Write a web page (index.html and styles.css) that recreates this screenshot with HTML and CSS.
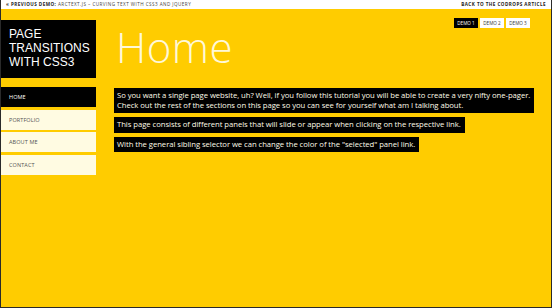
FILE: index.html
```html
<!DOCTYPE html>
<html>
<head>
<meta charset="utf-8">
<link rel="stylesheet" href="styles.css">
</head>
<body>
<div class="frame">
  <div class="topbar">
    <span class="prev"><b>&laquo; Previous Demo:</b> ArcText.js &ndash; Curving Text with CSS3 and jQuery</span>
    <span class="back"><b>Back to the Codrops Article</b></span>
  </div>
  <div class="main">
    <aside class="side">
      <h1 class="logo"><span class="logo-line">Page</span><span class="logo-line">Transitions</span><span class="logo-line">with CSS3</span></h1>
      <nav class="nav">
        <a class="nav-item active">Home</a>
        <a class="nav-item">Portfolio</a>
        <a class="nav-item">About me</a>
        <a class="nav-item">Contact</a>
      </nav>
    </aside>
    <section class="content">
      <h2 class="title">Home</h2>
      <div class="panels">
        <p class="panel">So you want a single page website, uh? Well, if you follow this tutorial you will be able to create a very nifty one-pager.<br>Check out the rest of the sections on this page so you can see for yourself what am I talking about.</p>
        <p class="panel">This page consists of different panels that will slide or appear when clicking on the respective link.</p>
        <p class="panel">With the general sibling selector we can change the color of the "selected" panel link.</p>
      </div>
    </section>
    <div class="demos">
      <a class="demo active">DEMO 1</a>
      <a class="demo">DEMO 2</a>
      <a class="demo">DEMO 3</a>
    </div>
  </div>
</div>
</body>
</html>
```
FILE: styles.css
```css
* { box-sizing: border-box; }
html, body { margin: 0; padding: 0; }
body { width: 552px; height: 308px; overflow: hidden; font-family: "Open Sans", sans-serif; }
.frame {
  width: 552px; height: 308px;
  border: 1px solid #2a2a2a; border-top: 0;
  background: #ffcc00;
  display: flex; flex-direction: column;
}
.topbar {
  height: 9px; background: #fff;
  display: flex; justify-content: space-between; align-items: center;
  padding: 0 5px 0 5px;
  font-size: 4.6px; letter-spacing: 0.45px; text-transform: uppercase; color: #444;
  line-height: 9px;
}
.topbar b { font-weight: 700; color: #222; }
.main { position: relative; flex: 1; display: flex; padding-top: 11px; }
.side { width: 95px; display: flex; flex-direction: column; }
.logo {
  margin: 0; background: #000; color: #fff;
  height: 58px; padding: 7px 0 0 8px;
  font-family: "Liberation Sans", Arial, sans-serif;
  font-weight: 400; font-size: 12px; line-height: 14px; text-transform: uppercase;
  letter-spacing: 0;
  display: flex; flex-direction: column;
}
.logo-line { display: block; height: 14px; }
.nav { display: flex; flex-direction: column; gap: 2.5px; margin-top: 9px; }
.nav-item {
  height: 20px; background: #fffbe2; color: #555;
  font-size: 5.5px; text-transform: uppercase; letter-spacing: 0.1px;
  display: flex; align-items: center; padding-left: 8px;
}
.nav-item.active { background: #000; color: #fff; }
.content { margin-left: 18px; }
.title {
  margin: 0 0 0 2px; font-weight: 300; font-size: 42px; line-height: 53px;
  color: #fff8d8; height: 68px; letter-spacing: 0.5px;
}
.panels { display: flex; flex-direction: column; align-items: flex-start; gap: 4px; }
.panel {
  margin: 0; background: #000; color: #fffbe8;
  font-size: 7.7px; line-height: 9.5px; padding: 3px 4px 3px 3px;
  letter-spacing: -0.05px;
}
.demos { position: absolute; top: 9px; right: 21px; display: flex; gap: 2px; }
.demo {
  background: #fff; color: #333; font-size: 4.6px;
  height: 10px; line-height: 10px; width: 24px; text-align: center; white-space: nowrap;
}
.demo.active { background: #000; color: #fff; }
```
